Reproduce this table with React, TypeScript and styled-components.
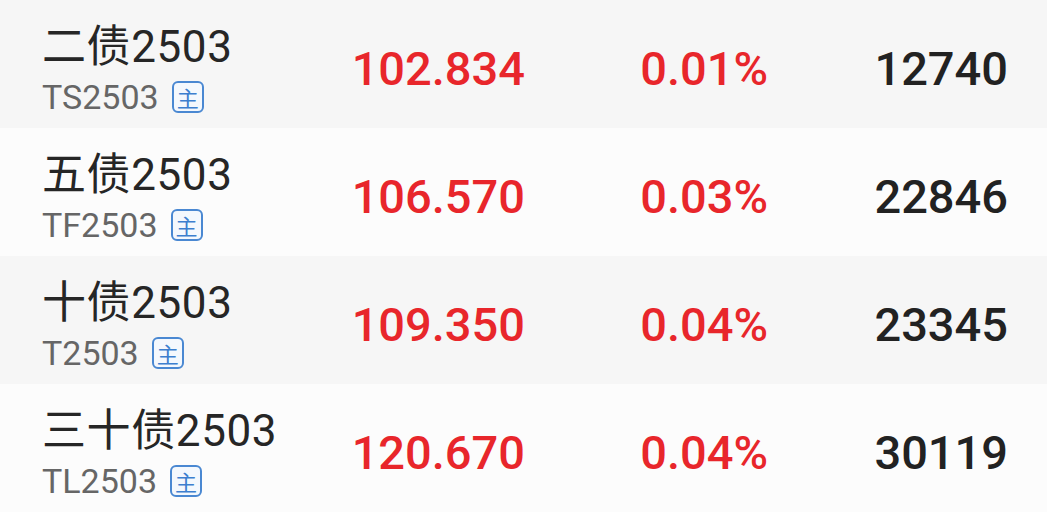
import React from "react";
import styled, { createGlobalStyle } from "styled-components";

const Global = createGlobalStyle`
  html, body { margin: 0; padding: 0; background: #ffffff; }
  body { font-family: Roboto, "Noto Sans CJK SC", sans-serif; }
`;

const List = styled.div`
  display: flex;
  flex-direction: column;
  width: 1047px;
`;

const Row = styled.div<{ $shade: boolean }>`
  display: grid;
  grid-template-columns: 283px 200px 243px 240px;
  align-items: center;
  height: 128px;
  padding: 0 39px 0 42px;
  background: ${(p) => (p.$shade ? "#f6f6f6" : "#fcfcfc")};
`;

const NameCell = styled.div`
  display: flex;
  flex-direction: column;
  gap: 4px;
  padding-top: 10px;
`;

const Name = styled.div`
  font-family: Roboto, "Noto Sans CJK SC", sans-serif;
  font-size: 44px;
  line-height: 52px;
  letter-spacing: 0.6px;
  color: #262626;
  white-space: nowrap;
`;

const CodeLine = styled.div`
  display: flex;
  align-items: center;
  gap: 13px;
  height: 40px;
`;

const Code = styled.span`
  font-family: Roboto, sans-serif;
  font-size: 34px;
  line-height: 40px;
  color: #666666;
`;

const Badge = styled.span`
  display: inline-flex;
  align-items: center;
  justify-content: center;
  box-sizing: border-box;
  width: 32px;
  height: 32px;
  border: 2px solid #4a88d2;
  border-radius: 6px;
  background: #f4f8fd;
  color: #3d7fcf;
  font-family: "Noto Sans CJK SC", sans-serif;
  font-size: 22px;
  line-height: 1;
`;

const Num = styled.div<{ $red?: boolean }>`
  text-align: right;
  font-family: Roboto, sans-serif;
  font-weight: 500;
  font-size: 47px;
  line-height: 47px;
  padding-top: 8px;
  color: ${(p) => (p.$red ? "#e8262b" : "#222222")};
`;

const rows = [
  { name: "二债2503", code: "TS2503", price: "102.834", pct: "0.01%", vol: "12740" },
  { name: "五债2503", code: "TF2503", price: "106.570", pct: "0.03%", vol: "22846" },
  { name: "十债2503", code: "T2503", price: "109.350", pct: "0.04%", vol: "23345" },
  { name: "三十债2503", code: "TL2503", price: "120.670", pct: "0.04%", vol: "30119" },
];

export default function App() {
  return (
    <>
      <Global />
      <List>
        {rows.map((r, i) => (
          <Row key={r.code} $shade={i % 2 === 0}>
            <NameCell>
              <Name>{r.name}</Name>
              <CodeLine>
                <Code>{r.code}</Code>
                <Badge>主</Badge>
              </CodeLine>
            </NameCell>
            <Num $red>{r.price}</Num>
            <Num $red>{r.pct}</Num>
            <Num>{r.vol}</Num>
          </Row>
        ))}
      </List>
    </>
  );
}
